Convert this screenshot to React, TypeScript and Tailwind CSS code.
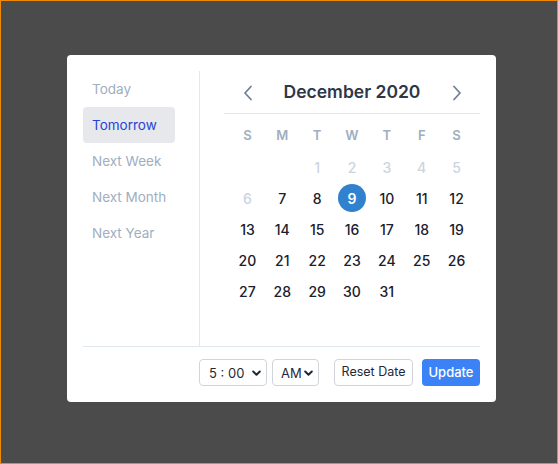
import React from 'react';

const presets = ["Today", "Tomorrow", "Next Week", "Next Month", "Next Year"];
const weekdays = ["S", "M", "T", "W", "T", "F", "S"];

const cells: { d: number | null; muted?: boolean }[] = [
    { d: null }, { d: null },
    { d: 1, muted: true }, { d: 2, muted: true }, { d: 3, muted: true }, { d: 4, muted: true }, { d: 5, muted: true },
    { d: 6, muted: true },
    ...Array.from({ length: 25 }, (_, i) => ({ d: i + 7 })),
];

function Chevron({ dir }: { dir: 'left' | 'right' }) {
    return (
        <svg width="10" height="16" viewBox="0 0 10 16" fill="none" stroke="#718096" strokeWidth="1.8" strokeLinecap="round" strokeLinejoin="round">
            {dir === 'left' ? <path d="M8 1.5 L2 8 L8 14.5" /> : <path d="M2 1.5 L8 8 L2 14.5" />}
        </svg>
    );
}

function Select({ value, width, pad }: { value: string; width: string; pad: string }) {
    return (
        <div className={`relative shrink-0 h-[27px] ${width} rounded border border-[#d1d5db] bg-white`}>
            <select className={`appearance-none w-full h-full bg-transparent ${pad} pr-[2px] text-[13px] text-[#1f2937] outline-none`} defaultValue={value}>
                <option>{value}</option>
            </select>
            <svg className="absolute right-[5px] top-[10px] pointer-events-none" width="9" height="7" viewBox="0 0 9 7" fill="none" stroke="#1f2937" strokeWidth="2" strokeLinecap="round" strokeLinejoin="round">
                <path d="M1.2 1.5 L4.5 4.8 L7.8 1.5" />
            </svg>
        </div>
    );
}

export default function App() {
    return (
        <div className="w-[558px] h-[464px] bg-[#4b4b4b] border border-[#f08a00] pl-[66px] pt-[54px]" style={{ fontFamily: 'Inter, "Noto Sans", sans-serif' }}>
            <div className="w-[429px] bg-white rounded-[4px] p-4">
                <div className="flex h-[276px] border-b border-[#e2e8f0]">
                    {/* presets */}
                    <div className="w-[117px] pr-6 border-r border-[#e2e8f0] flex flex-col">
                        {presets.map((p) => (
                            <div
                                key={p}
                                className={`h-[36px] flex items-center pl-[9px] rounded-[4px] text-[13.5px] ${p === "Tomorrow" ? "bg-[#e6e8ec] text-[#2544d6]" : "text-[#a0aec0]"}`}
                            >
                                {p}
                            </div>
                        ))}
                    </div>

                    {/* calendar */}
                    <div className="flex-1 pl-6">
                        <div className="h-[43px] border-b border-[#e2e8f0] px-[6px] flex items-center">
                            <div className="w-[35px] flex justify-center pt-[1px]"><Chevron dir="left" /></div>
                            <div className="flex-1 text-center text-[17.5px] font-semibold text-[#2d3748]">December 2020</div>
                            <div className="w-[35px] flex justify-center pt-[1px]"><Chevron dir="right" /></div>
                        </div>
                        <div className="mt-[6px] px-[6px] grid grid-cols-7 auto-rows-[31px]">
                            {weekdays.map((w, i) => (
                                <div key={i} className="flex items-center justify-center pt-[1px] text-[13px] font-semibold text-[#a0aec0]">{w}</div>
                            ))}
                            {cells.map((c, i) => (
                                <div key={i} className="flex items-center justify-center pt-[1px]">
                                    {c.d === 9 ? (
                                        <span className="w-[28px] h-[28px] rounded-full bg-[#3182ce] text-white font-semibold text-[14px] flex items-center justify-center">9</span>
                                    ) : (
                                        <span className={`text-[14px] font-medium ${c.muted ? "text-[#cbd5e0]" : "text-[#1a202c]"}`}>{c.d ?? ""}</span>
                                    )}
                                </div>
                            ))}
                        </div>
                    </div>
                </div>

                {/* footer */}
                <div className="flex items-center justify-end pt-[12px]">
                    <Select value="5 : 00" width="w-[68px]" pad="pl-[9px]" />
                    <div className="ml-[5px] shrink-0"><Select value="AM" width="w-[47px]" pad="pl-[8px]" /></div>
                    <button className="ml-[15px] shrink-0 w-[79px] h-[27px] rounded border border-[#d1d5db] bg-white text-[12.5px] text-[#1f2937]">Reset Date</button>
                    <button className="ml-[9px] shrink-0 w-[58px] h-[27px] rounded bg-[#3b82f6] text-[13px] font-medium text-white">Update</button>
                </div>
            </div>
        </div>
    );
}
